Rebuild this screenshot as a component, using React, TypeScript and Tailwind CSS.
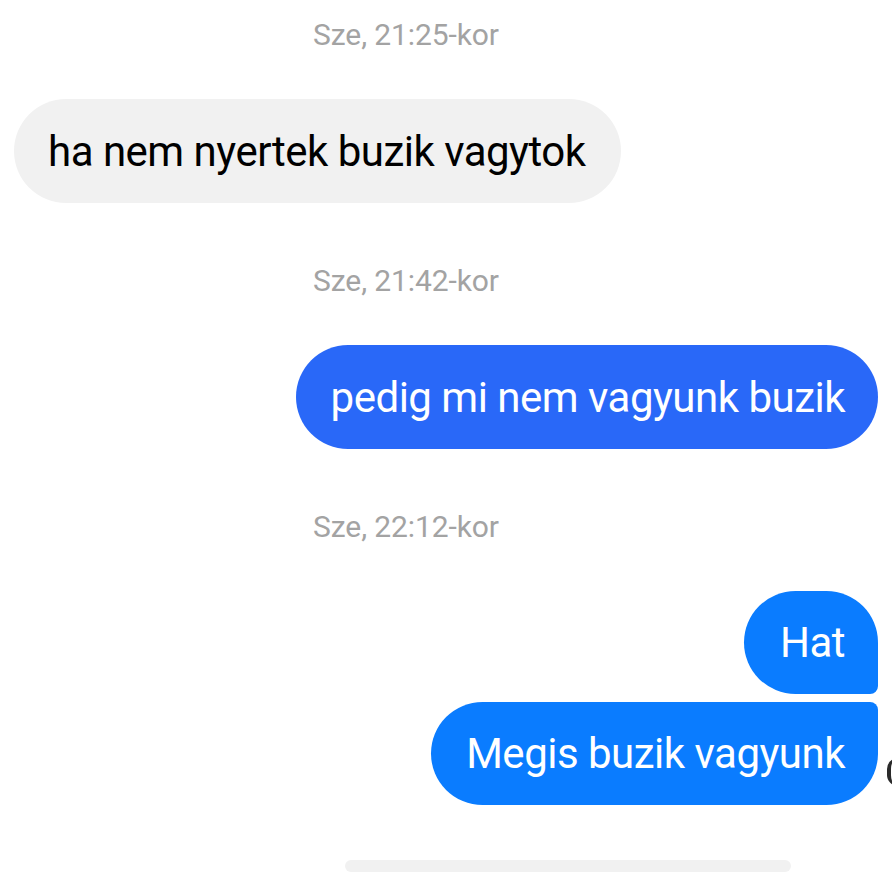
import React from "react";

const font = { fontFamily: "Roboto, 'Noto Sans', sans-serif" };

function Stamp({ text }: { text: string }) {
  return (
    <div className="flex justify-center h-[30px] items-center text-[30px] leading-[30px] text-[#a3a3a3] tracking-[-0.1px]">
      <span className="ml-[-80px]">{text}</span>
    </div>
  );
}

export default function App() {
  return (
    <div
      className="relative w-[892px] h-[872px] overflow-hidden bg-white flex flex-col px-[14px] pt-[20px]"
      style={font}
    >
      <Stamp text="Sze, 21:25-kor" />
      <div className="mt-[49px] flex justify-start">
        <div className="h-[104px] flex items-center pl-[34px] pr-[35px] rounded-[52px] bg-[#f1f1f1] text-[42px] text-black tracking-[-0.5px]">
          ha nem nyertek buzik vagytok
        </div>
      </div>
      <div className="mt-[63px]">
        <Stamp text="Sze, 21:42-kor" />
      </div>
      <div className="mt-[49px] flex justify-end">
        <div className="h-[104px] flex items-center pl-[35px] pr-[33px] rounded-[52px] bg-[#2968f8] text-[42px] text-white tracking-[-0.5px]">
          pedig mi nem vagyunk buzik
        </div>
      </div>
      <div className="mt-[63px]">
        <Stamp text="Sze, 22:12-kor" />
      </div>
      <div className="mt-[49px] flex justify-end">
        <div className="h-[103px] flex items-center pl-[36px] pr-[33px] rounded-tl-[52px] rounded-tr-[52px] rounded-bl-[52px] rounded-br-[8px] bg-[#0a7cff] text-[42px] text-white tracking-[-0.5px]">
          Hat
        </div>
      </div>
      <div className="relative mt-[8px] flex justify-end">
        <div className="h-[103px] flex items-center pl-[35px] pr-[33px] rounded-tl-[52px] rounded-bl-[52px] rounded-tr-[8px] rounded-br-[52px] bg-[#0a7cff] text-[42px] text-white tracking-[-0.5px]">
          Megis buzik vagyunk
        </div>
        <div className="absolute right-[-31px] top-[56px] w-[22px] h-[28px] rounded-full border-l-[4px] border-[#2a2a2a]" />
      </div>
      <div className="mt-[55px] ml-[331px] w-[446px] h-[80px] rounded-[40px] bg-[#f1f1f1]" />
    </div>
  );
}
